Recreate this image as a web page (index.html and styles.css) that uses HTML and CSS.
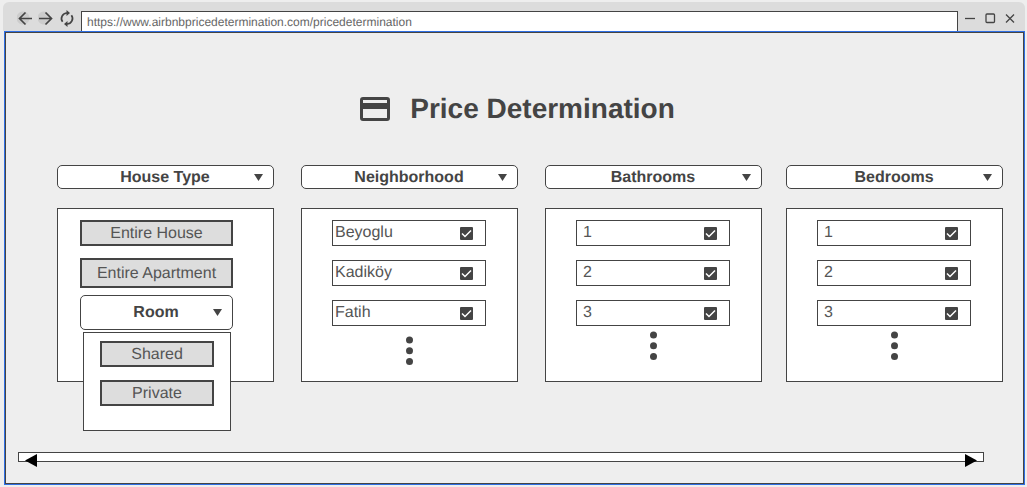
FILE: index.html
```html
<!DOCTYPE html>
<html lang="en">
<head>
<meta charset="utf-8">
<title>Price Determination</title>
<link rel="stylesheet" href="styles.css">
</head>
<body>
<div class="browser">
  <header class="toolbar">
    <nav class="nav">
      <button class="icon-button icon-button--halo" aria-label="Back"><svg width="16" height="16" viewBox="0 0 16 16"><path d="M15 8.500H2M8.500 2.500L2.500 8.500l6 6"/></svg></button>
      <button class="icon-button icon-button--halo" aria-label="Forward"><svg width="16" height="16" viewBox="0 0 16 16"><path d="M1 8.500h13M7.500 2.500l6 6-6 6"/></svg></button>
      <button class="icon-button" aria-label="Reload"><svg width="16" height="16" viewBox="0 0 16 16"><path d="M9 3H8A5.500 5.500 0 0 0 3.600 11.800M7 14h1A5.500 5.500 0 0 0 12.400 5.200"/><path class="solid" d="M7.500 0v6l3.500-3zM8.500 11v6L5 14z"/></svg></button>
    </nav>
    <input class="address" type="text" aria-label="Address" value="https://www.airbnbpricedetermination.com/pricedetermination">
    <div class="window-controls">
      <button class="icon-button" aria-label="Minimize"><svg width="12" height="12" viewBox="0 0 12 12"><path class="thin" d="M1 6.500h10"/></svg></button>
      <button class="icon-button" aria-label="Maximize"><svg width="12" height="12" viewBox="0 0 12 12"><rect class="thin" x="2" y="2" width="8.500" height="8.500" rx="1"/></svg></button>
      <button class="icon-button" aria-label="Close"><svg width="12" height="12" viewBox="0 0 12 12"><path class="thin" d="M2 2.500l8 8M10 2.500l-8 8"/></svg></button>
    </div>
  </header>

  <main class="page">
    <div class="title">
      <svg width="30" height="24" viewBox="0 0 30 24" aria-hidden="true"><path fill-rule="evenodd" d="M3 0h24a3 3 0 0 1 3 3v18a3 3 0 0 1-3 3H3a3 3 0 0 1-3-3V3a3 3 0 0 1 3-3zM3 3v3h24V3zM3 12v9h24v-9z"/></svg>
      <h1>Price Determination</h1>
    </div>

    <div class="filters">
      <section class="filter filter--wide">
        <div class="dropdown">
          <select aria-label="House Type"><option>House Type</option></select>
          <svg class="caret" width="9" height="7" viewBox="0 0 9 7"><path d="M0 0h9L4.500 7z"/></svg>
        </div>
        <div class="panel panel--types">
          <button class="choice">Entire House</button>
          <button class="choice choice--tall">Entire Apartment</button>
          <div class="dropdown dropdown--tall">
            <select aria-label="Room"><option>Room</option></select>
            <svg class="caret" width="9" height="7" viewBox="0 0 9 7"><path d="M0 0h9L4.500 7z"/></svg>
            <div class="submenu">
              <button class="choice">Shared</button>
              <button class="choice">Private</button>
            </div>
          </div>
        </div>
      </section>

      <section class="filter filter--wide">
        <div class="dropdown">
          <select aria-label="Neighborhood"><option>Neighborhood</option></select>
          <svg class="caret" width="9" height="7" viewBox="0 0 9 7"><path d="M0 0h9L4.500 7z"/></svg>
        </div>
        <div class="panel">
          <div class="options options--names">
            <label class="option">Beyoglu <span class="check"><input type="checkbox" checked><svg width="13" height="13" viewBox="0 0 13 13"><path d="M2 6.500l3 3 6-6"/></svg></span></label>
            <label class="option">Kadiköy <span class="check"><input type="checkbox" checked><svg width="13" height="13" viewBox="0 0 13 13"><path d="M2 6.500l3 3 6-6"/></svg></span></label>
            <label class="option">Fatih <span class="check"><input type="checkbox" checked><svg width="13" height="13" viewBox="0 0 13 13"><path d="M2 6.500l3 3 6-6"/></svg></span></label>
          </div>
          <svg class="more more--low" width="8" height="29" viewBox="0 0 8 29"><circle cx="4.500" cy="4" r="3.500"/><circle cx="4.500" cy="14.800" r="3.500"/><circle cx="4.500" cy="25.500" r="3.500"/></svg>
        </div>
      </section>

      <section class="filter">
        <div class="dropdown">
          <select aria-label="Bathrooms"><option>Bathrooms</option></select>
          <svg class="caret" width="9" height="7" viewBox="0 0 9 7"><path d="M0 0h9L4.500 7z"/></svg>
        </div>
        <div class="panel">
          <div class="options">
            <label class="option">1 <span class="check"><input type="checkbox" checked><svg width="13" height="13" viewBox="0 0 13 13"><path d="M2 6.500l3 3 6-6"/></svg></span></label>
            <label class="option">2 <span class="check"><input type="checkbox" checked><svg width="13" height="13" viewBox="0 0 13 13"><path d="M2 6.500l3 3 6-6"/></svg></span></label>
            <label class="option">3 <span class="check"><input type="checkbox" checked><svg width="13" height="13" viewBox="0 0 13 13"><path d="M2 6.500l3 3 6-6"/></svg></span></label>
          </div>
          <svg class="more" width="8" height="29" viewBox="0 0 8 29"><circle cx="4.500" cy="4" r="3.500"/><circle cx="4.500" cy="14.800" r="3.500"/><circle cx="4.500" cy="25.500" r="3.500"/></svg>
        </div>
      </section>

      <section class="filter">
        <div class="dropdown">
          <select aria-label="Bedrooms"><option>Bedrooms</option></select>
          <svg class="caret" width="9" height="7" viewBox="0 0 9 7"><path d="M0 0h9L4.500 7z"/></svg>
        </div>
        <div class="panel">
          <div class="options">
            <label class="option">1 <span class="check"><input type="checkbox" checked><svg width="13" height="13" viewBox="0 0 13 13"><path d="M2 6.500l3 3 6-6"/></svg></span></label>
            <label class="option">2 <span class="check"><input type="checkbox" checked><svg width="13" height="13" viewBox="0 0 13 13"><path d="M2 6.500l3 3 6-6"/></svg></span></label>
            <label class="option">3 <span class="check"><input type="checkbox" checked><svg width="13" height="13" viewBox="0 0 13 13"><path d="M2 6.500l3 3 6-6"/></svg></span></label>
          </div>
          <svg class="more" width="8" height="29" viewBox="0 0 8 29"><circle cx="4.500" cy="4" r="3.500"/><circle cx="4.500" cy="14.800" r="3.500"/><circle cx="4.500" cy="25.500" r="3.500"/></svg>
        </div>
      </section>
    </div>

    <div class="scrollbar">
      <button class="scroll-arrow scroll-arrow--left" aria-label="Scroll left"><svg width="12" height="13" viewBox="0 0 12 13"><path d="M12 0v13L0 6.500z"/></svg></button>
      <button class="scroll-arrow scroll-arrow--right" aria-label="Scroll right"><svg width="12" height="13" viewBox="0 0 12 13"><path d="M0 0v13l12-6.500z"/></svg></button>
    </div>
  </main>
</div>
</body>
</html>
```
FILE: styles.css
```css
* { box-sizing: border-box; }

body {
  margin: 0;
  background: #eeeeee;
  color: #444444;
  font: 16px/20px "Liberation Sans", Arial, sans-serif;
  text-rendering: geometricPrecision;
}

button, select, input {
  font: inherit;
  color: inherit;
  margin: 0;
  text-rendering: inherit;
}
svg { display: block; }

.browser { padding: 2px 2px 2px 3px; }

.toolbar {
  display: flex;
  align-items: flex-end;
  height: 29px;
  padding-right: 7px;
  background: #dcdcdc;
  border-radius: 6px 6px 0 0;
}

.nav { display: flex; gap: 5px; padding: 0 6px 5px 14px; }

.icon-button {
  display: grid;
  place-items: center;
  padding: 0;
  border: 0;
  background: none;
}
.icon-button--halo { background: radial-gradient(circle at 6px 8px, #cccccc 6px, transparent 7px); }
.icon-button svg { fill: none; stroke: #444444; stroke-width: 1.700; overflow: visible; }
.icon-button .thin { stroke-width: 1.300; }
.icon-button .solid { fill: #444444; stroke: none; }

.address {
  flex: 1;
  min-width: 0;
  height: 20px;
  padding: 1px 5px 0;
  border: 1px solid #444444;
  border-bottom: 0;
  border-radius: 0;
  background: #ffffff;
  color: #666666;
  font-size: 12px;
}

.window-controls { display: flex; gap: 8px; padding: 0 2px 7px 6px; }

.page {
  margin: 1px 1px 0 2px;
  padding: 60px 20px 21px 12px;
  border: 1px solid #444444;
  outline: 1px solid #2f6fe4;
}

.title {
  display: flex;
  align-items: center;
  justify-content: center;
  gap: 20px;
  padding-left: 14px;
}
.title svg { fill: #444444; }
.title h1 { margin: 0; font-size: 28px; line-height: 32px; }

.filters {
  display: grid;
  grid-template-columns: 220fr 220fr 217fr 217fr;
  gap: 24px;
  margin: 40px 0 0 39px;
}

.filter { display: flex; flex-direction: column; gap: 19px; }
.filter--wide { padding-right: 3px; }

.dropdown { position: relative; height: 24px; }
.dropdown--tall { height: 35px; }
.dropdown select {
  display: block;
  appearance: none;
  width: 100%;
  height: 100%;
  padding: 1px 1px 0 0;
  border: 1px solid #444444;
  border-radius: 5px;
  background: #ffffff;
  font-weight: bold;
  text-align: center;
  text-align-last: center;
}
.caret {
  position: absolute;
  top: 0;
  bottom: 0;
  right: 11px;
  margin: auto 0;
  fill: #444444;
  pointer-events: none;
}

.panel {
  flex: 1;
  padding: 11px 31px 16px 30px;
  border: 1px solid #444444;
  background: #ffffff;
}
.panel--types {
  display: flex;
  flex-direction: column;
  padding: 11px 40px 0 22px;
}

.choice {
  display: block;
  width: 100%;
  height: 26px;
  padding: 1px 0 0;
  border: 2px solid #444444;
  background: #dddddd;
  color: #555555;
  line-height: 20px;
}
.choice--tall { height: 30px; margin: 12px 0 7px; }

.submenu {
  position: absolute;
  top: 37px;
  left: 3px;
  right: 2px;
  display: flex;
  flex-direction: column;
  gap: 13px;
  padding: 8px 16px 24px;
  border: 1px solid #444444;
  background: #ffffff;
}

.options { display: grid; gap: 14px; }
.option {
  display: flex;
  align-items: center;
  justify-content: space-between;
  height: 26px;
  padding: 0 12px 0 6px;
  border: 1px solid #444444;
  color: #555555;
}
.options--names .option { padding-left: 2px; }

.check { display: grid; }
.check input, .check svg { grid-area: 1 / 1; }
.check input {
  appearance: none;
  width: 13px;
  height: 13px;
  border-radius: 1px;
  background: #444444;
}
.check svg {
  fill: none;
  stroke: #ffffff;
  stroke-width: 1.500;
  pointer-events: none;
}

.more { margin: 5px auto; fill: #444444; }
.more--low { margin: 10px auto 0; }

.scrollbar {
  position: relative;
  height: 10px;
  margin: 70px 19px 0 0;
  border: 1px solid #444444;
  background: #ffffff;
}
.scroll-arrow {
  position: absolute;
  top: 1px;
  padding: 0;
  border: 0;
  background: none;
}
.scroll-arrow--left { left: 6px; }
.scroll-arrow--right { right: 6px; }
```
